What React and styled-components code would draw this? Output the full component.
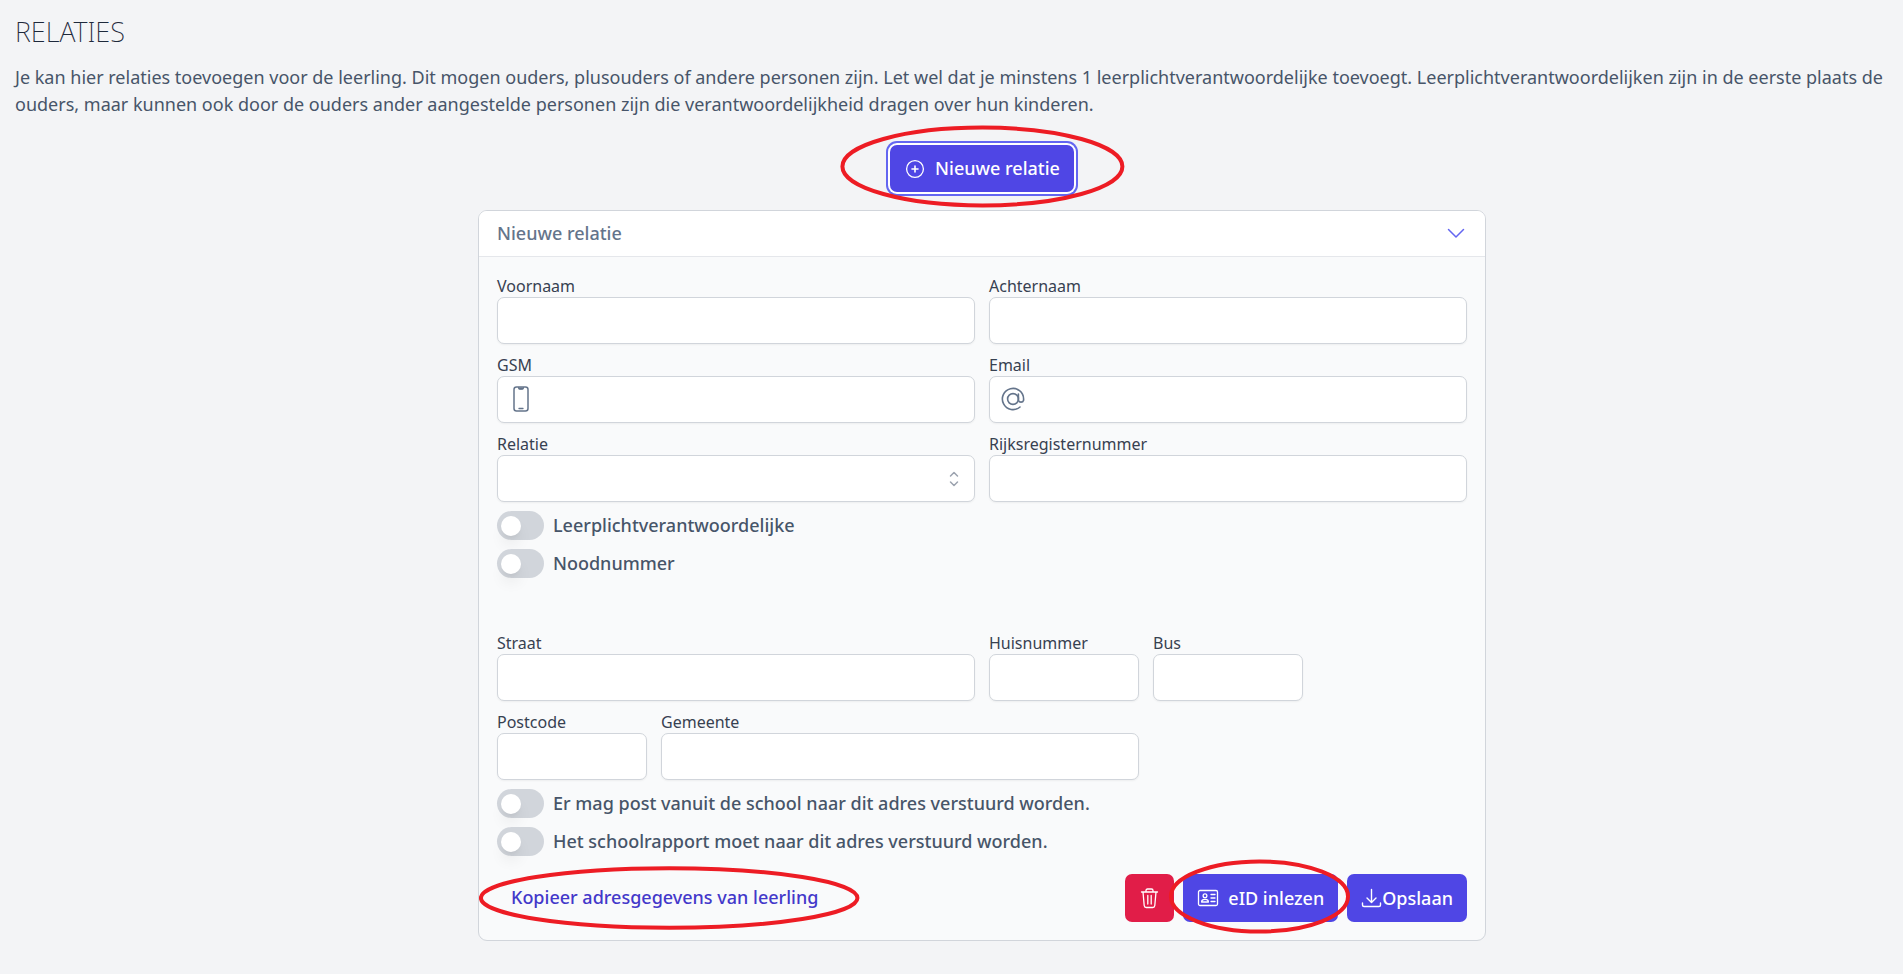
import React from "react";
import styled, { createGlobalStyle, css } from "styled-components";

const GlobalStyle = createGlobalStyle`
  *, *::before, *::after { box-sizing: border-box; }
  body {
    margin: 0;
    background: #f3f4f6;
    color: #475569;
    font-family: "Noto Sans", "Open Sans", sans-serif;
    font-size: 18px;
    line-height: 27px;
  }
  button, input, select { font: inherit; }
`;

const Page = styled.main`
  padding: 14px 14px 32px 15px;
`;

const Title = styled.h1`
  margin: 0 0 14px;
  color: #1e293b;
  font-size: 27px;
  font-weight: 200;
  line-height: 36px;
  text-transform: uppercase;
`;

const Intro = styled.p`
  margin: 0;
`;

const Stage = styled.div`
  display: flex;
  flex-direction: column;
  align-items: center;
  gap: 18px;
  margin-top: 27px;
  padding-left: 60px;
`;

const Marked = styled.div`
  position: relative;
  display: flex;
`;

const Ring = styled.svg`
  position: absolute;
  top: ${(p) => -p.$top}px;
  left: ${(p) => -p.$left}px;
  width: calc(100% + ${(p) => p.$left + p.$right}px);
  height: calc(100% + ${(p) => p.$top + p.$bottom}px);
  overflow: visible;
  pointer-events: none;
  z-index: 1;
`;

const Button = styled.button`
  display: inline-flex;
  align-items: center;
  gap: ${(p) => p.$gap ?? 9}px;
  height: ${(p) => p.$height ?? 48}px;
  padding: 0 14px;
  border: 0;
  border-radius: 7px;
  background: ${(p) => (p.$danger ? "#e11d48" : "#4f46e5")};
  color: #fff;
  font-weight: 500;
  white-space: nowrap;
  cursor: pointer;
  ${(p) => p.$focused && css`
    box-shadow: 0 0 0 2px #fff, 0 0 0 4px #6366f1;
  `}
`;

const LinkButton = styled.a`
  display: inline-flex;
  align-items: center;
  height: 47px;
  padding: 0 14px;
  color: #4338ca;
  font-weight: 500;
  text-decoration: none;
`;

const Card = styled.form`
  width: 100%;
  max-width: 1008px;
  border: 1px solid #d1d5db;
  border-radius: 9px;
  background: #f9fafb;
  overflow: hidden;
`;

const CardHeader = styled.header`
  display: flex;
  align-items: center;
  justify-content: space-between;
  height: 46px;
  padding: 0 18px;
  border-bottom: 1px solid #e5e7eb;
  background: #fff;
  color: #64748b;
`;

const CardTitle = styled.h2`
  margin: 0;
  font-size: 18px;
  font-weight: 500;
`;

const Collapse = styled.button`
  display: flex;
  padding: 0;
  border: 0;
  background: none;
  color: #6366f1;
`;

const CardBody = styled.div`
  padding: 18px;
`;

const Grid = styled.div`
  display: grid;
  grid-template-columns: repeat(6, 1fr);
  gap: 10px 14px;
`;

const Section = styled.section`
  & + & { margin-top: 54px; }
`;

const FieldBox = styled.div`
  grid-column: ${(p) => (p.$start ? `${p.$start} / ` : "")}span ${(p) => p.$span};
  min-width: 0;
`;

const Label = styled.label`
  display: block;
  color: #374151;
  font-size: 16px;
  line-height: 22px;
`;

const Control = styled.div`
  display: flex;
  align-items: center;
  height: 47px;
  border: 1px solid #d1d5db;
  border-radius: 7px;
  background: #fff;
  box-shadow: 0 1px 2px rgba(0, 0, 0, 0.05);
  color: #64748b;
  svg { flex: none; }
`;

const Lead = styled.span`
  display: flex;
  justify-content: center;
  width: 45px;
  padding-bottom: 1px;
`;

const controlText = css`
  flex: 1;
  align-self: stretch;
  min-width: 0;
  padding: 0 14px;
  border: 0;
  outline: 0;
  background: transparent;
  color: #374151;
`;

const Input = styled.input`${controlText}`;

const Select = styled.select`
  ${controlText}
  appearance: none;
`;

const Trail = styled.span`
  display: flex;
  padding-right: 15px;
  color: #9ca3af;
`;

const Toggles = styled.div`
  display: flex;
  flex-direction: column;
  align-items: flex-start;
  gap: 9px;
  margin-top: 9px;
`;

const ToggleRow = styled.label`
  display: flex;
  align-items: center;
  gap: 9px;
  height: 29px;
  font-weight: 500;
`;

const Switch = styled.input`
  appearance: none;
  display: flex;
  align-items: center;
  width: 47px;
  height: 29px;
  margin: 0;
  padding: 0 4px;
  border-radius: 15px;
  background: #d1d5db;
  &::before {
    content: "";
    width: 20px;
    height: 20px;
    border-radius: 50%;
    background: #fff;
    box-shadow: 0 10px 15px -3px rgba(0, 0, 0, 0.1), 0 4px 6px -4px rgba(0, 0, 0, 0.1);
  }
  &:checked { background: #4f46e5; justify-content: flex-end; }
`;

const Footer = styled.footer`
  display: flex;
  justify-content: space-between;
  align-items: flex-start;
  margin-top: 18px;
`;

const Actions = styled.div`
  display: flex;
  gap: 9px;
`;

function Icon({ w = 20, h = 20, box = `0 0 ${w} ${h}`, sw = 1.3, children }) {
  return (
    <svg width={w} height={h} viewBox={box} fill="none" stroke="currentColor"
      strokeWidth={sw} strokeLinecap="round" strokeLinejoin="round" aria-hidden="true">
      {children}
    </svg>
  );
}

const PlusIcon = () => (
  <Icon w={22} h={22}>
    <circle cx="11" cy="11" r="8.4" />
    <path d="M11 8v6M8 11h6" strokeWidth="1.6" />
  </Icon>
);

const ChevronIcon = () => (
  <Icon w={22} h={22} sw={1.5}><path d="M3.5 6.500 11 14l7.500-7.500" /></Icon>
);

const PhoneIcon = () => (
  <Icon w={16} h={26} sw={1.5}>
    <rect x="1" y="1" width="14" height="24" rx="2.500" />
    <path d="M5.500 1.500v1q0 .8.8.8h3.400q.8 0 .8-.8v-1" fill="currentColor" strokeWidth="1" />
    <path d="M6 22.500h4" strokeWidth="1.300" />
  </Icon>
);

const AtIcon = () => (
  <Icon w={24} h={24} sw={1.6}>
    <circle cx="12" cy="12" r="5.400" />
    <path d="M17.400 7v6.200a2.700 2.700 0 0 0 5.200 0V12a10.600 10.600 0 1 0-3.600 8" />
  </Icon>
);

const SelectorIcon = () => (
  <Icon w={10} h={16} sw={1.5}><path d="M1.500 5 5 1.500 8.500 5M1.500 11 5 14.500 8.500 11" /></Icon>
);

const TrashIcon = () => (
  <Icon w={21} h={22}>
    <path d="M2.500 5h16M4 5l1.200 13.500q.2 2 2 2h6.600q1.800 0 2-2L17 5M7 5V3.500Q7 2 8.500 2h4Q14 2 14 3.500V5M8.800 8.500v8.500M12.200 8.500v8.500" />
  </Icon>
);

const IdIcon = () => (
  <Icon w={22} h={20}>
    <rect x="1.500" y="2.500" width="19" height="15" rx="1.500" />
    <circle cx="8" cy="7.800" r="1.900" />
    <path d="M4.600 14q0-2.600 3.400-2.600t3.400 2.600zM14 6.500h4M14 10h4M14 13.500h4" />
  </Icon>
);

const DownloadIcon = () => (
  <Icon w={21} h={22} sw={1.4}>
    <path d="M10.500 2.500v13M6 11l4.500 4.500L15 11M1.500 16v2q0 1.500 1.500 1.500h15q1.500 0 1.500-1.500v-2" />
  </Icon>
);

function Oval({ top, right, bottom, left }) {
  return (
    <Ring $top={top} $right={right} $bottom={bottom} $left={left} aria-hidden="true">
      <ellipse cx="50%" cy="50%" rx="49.500%" ry="48%" fill="none" stroke="#ed1c24" strokeWidth="4" />
    </Ring>
  );
}

function Field({ id, label, span, start, icon, type = "text", select }) {
  return (
    <FieldBox $span={span} $start={start}>
      <Label htmlFor={id}>{label}</Label>
      <Control>
        {icon && <Lead>{icon}</Lead>}
        {select ? (
          <>
            <Select id={id} defaultValue=""><option value="" /></Select>
            <Trail><SelectorIcon /></Trail>
          </>
        ) : (
          <Input id={id} type={type} />
        )}
      </Control>
    </FieldBox>
  );
}

function Toggle({ id, children }) {
  return (
    <ToggleRow htmlFor={id}>
      <Switch id={id} type="checkbox" role="switch" />
      {children}
    </ToggleRow>
  );
}

export default function App() {
  return (
    <>
      <GlobalStyle />
      <Page>
        <Title>Relaties</Title>
        <Intro>
          Je kan hier relaties toevoegen voor de leerling. Dit mogen ouders, plusouders of andere
          personen zijn. Let wel dat je minstens 1 leerplichtverantwoordelijke toevoegt.
          Leerplichtverantwoordelijken zijn in de eerste plaats de ouders, maar kunnen ook door de
          ouders ander aangestelde personen zijn die verantwoordelijkheid dragen over hun kinderen.
        </Intro>
        <Stage>
          <Marked>
            <Button type="button" $focused $height={47}><PlusIcon />Nieuwe relatie</Button>
            <Oval top={19} right={50} bottom={15} left={49} />
          </Marked>
          <Card>
            <CardHeader>
              <CardTitle>Nieuwe relatie</CardTitle>
              <Collapse type="button" aria-label="Inklappen"><ChevronIcon /></Collapse>
            </CardHeader>
            <CardBody>
              <Section>
                <Grid>
                  <Field id="voornaam" label="Voornaam" span={3} />
                  <Field id="achternaam" label="Achternaam" span={3} />
                  <Field id="gsm" label="GSM" span={3} type="tel" icon={<PhoneIcon />} />
                  <Field id="email" label="Email" span={3} type="email" icon={<AtIcon />} />
                  <Field id="relatie" label="Relatie" span={3} select />
                  <Field id="rijksregister" label="Rijksregisternummer" span={3} />
                </Grid>
                <Toggles>
                  <Toggle id="leerplicht">Leerplichtverantwoordelijke</Toggle>
                  <Toggle id="nood">Noodnummer</Toggle>
                </Toggles>
              </Section>
              <Section>
                <Grid>
                  <Field id="straat" label="Straat" span={3} />
                  <Field id="huisnummer" label="Huisnummer" span={1} />
                  <Field id="bus" label="Bus" span={1} />
                  <Field id="postcode" label="Postcode" span={1} start={1} />
                  <Field id="gemeente" label="Gemeente" span={3} />
                </Grid>
                <Toggles>
                  <Toggle id="post">Er mag post vanuit de school naar dit adres verstuurd worden.</Toggle>
                  <Toggle id="rapport">Het schoolrapport moet naar dit adres verstuurd worden.</Toggle>
                </Toggles>
              </Section>
              <Footer>
                <Marked>
                  <LinkButton href="#kopieer">Kopieer adresgegevens van leerling</LinkButton>
                  <Oval top={7} right={27} bottom={8} left={18} />
                </Marked>
                <Actions>
                  <Button type="button" $danger aria-label="Verwijderen"><TrashIcon /></Button>
                  <Marked>
                    <Button type="button"><IdIcon />eID inlezen</Button>
                    <Oval top={14} right={11} bottom={11} left={13} />
                  </Marked>
                  <Button type="submit" $gap={0}><DownloadIcon />Opslaan</Button>
                </Actions>
              </Footer>
            </CardBody>
          </Card>
        </Stage>
      </Page>
    </>
  );
}
